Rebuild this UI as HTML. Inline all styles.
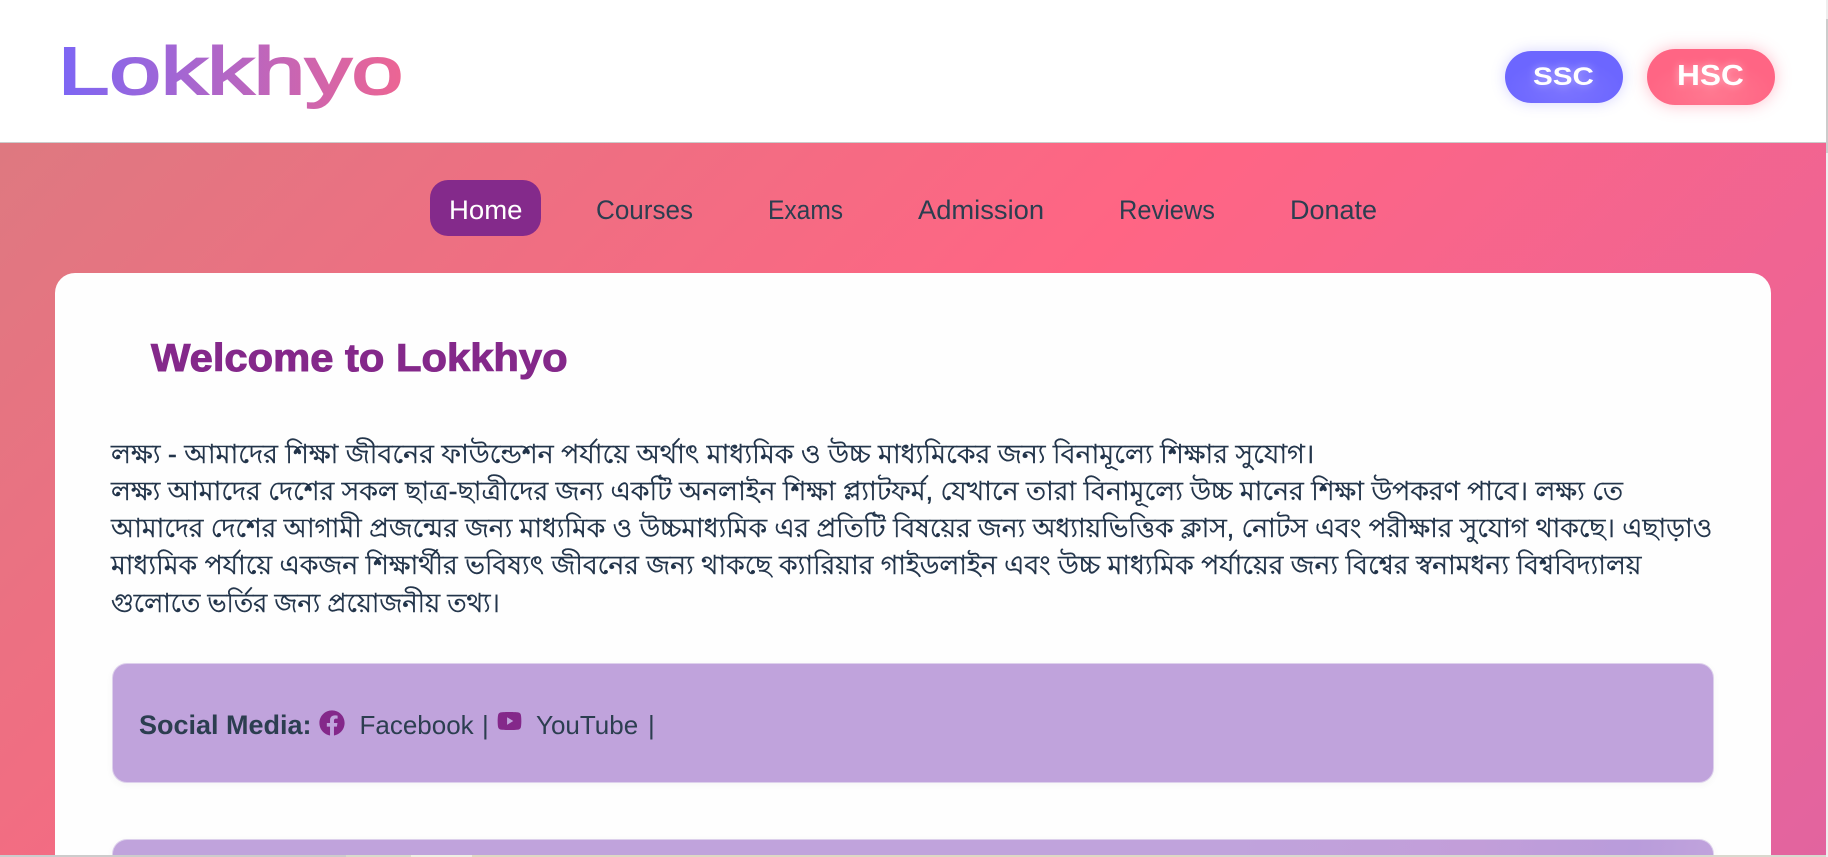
<!DOCTYPE html>
<html lang="bn">
<head>
<meta charset="utf-8">
<title>Lokkhyo</title>
<style>
html,body{margin:0;padding:0;width:1828px;height:857px;overflow:hidden;background:#fff}
body{position:relative;font-family:"Liberation Sans",sans-serif;color:#2c3e50}
.abs,.nav,.line,.soc{position:absolute;white-space:nowrap}
#bg{position:absolute;left:0;top:0;width:1828px;height:857px;background:linear-gradient(135deg,#da7b80 0%,#ff6584 50%,#e2649f 100%)}
#header{position:absolute;left:0;top:0;width:1826px;height:142px;background:#fff;border-bottom:1px solid #ccc}
#logo{left:56.5px;top:33.5px;padding:0 2px;margin-left:-2px;font-size:67px;line-height:76px;transform-origin:0 0;transform:scaleX(1.384);background:linear-gradient(90deg,#7b66f6,#ee6592);-webkit-background-clip:text;background-clip:text;color:transparent;-webkit-text-fill-color:transparent;-webkit-text-stroke:2px transparent}
.pill{position:absolute}
#ssc{left:1505px;top:51px;width:118px;height:52px;border-radius:26px;background:radial-gradient(ellipse 50% 60% at 50% 75%,#7c74ff,#6c66ff);box-shadow:0 0 14px rgba(108,99,255,.28)}
#hsc{left:1647px;top:49px;width:128px;height:56px;border-radius:28px;background:radial-gradient(ellipse 50% 60% at 50% 80%,#ff7890,#ff6584);box-shadow:0 0 16px rgba(255,101,132,.42)}
.pt{position:absolute;color:#fff;font-weight:bold;transform-origin:0 0;text-shadow:0 0 8px rgba(255,255,255,.45);white-space:nowrap}
#pill-home{position:absolute;left:430px;top:180px;width:111px;height:56px;border-radius:18px;background:#842a8b}
.nav{top:195px;font-size:27px;line-height:30px;transform-origin:0 0}
#card{position:absolute;left:55px;top:273px;width:1716px;height:584px;border-radius:20px 20px 0 0;background:#fefefe}
#title{left:151px;top:336.5px;font-size:39px;line-height:44px;font-weight:bold;color:#84288a;transform-origin:0 0;transform:scaleX(1.07);-webkit-text-stroke:1px #84288a}
.line{left:111px;font-size:26.4px;line-height:32px;color:#22344a;transform-origin:0 0;-webkit-text-stroke:.4px #22344a}
.box{position:absolute;left:112px;width:1600px;border:1px solid #ddd0ec;background:#c0a3dc;border-radius:15px;box-sizing:content-box;box-shadow:0 2px 8px rgba(0,0,0,.04)}
.soc{font-size:26px;line-height:30px;top:710px}
#strip{position:absolute;left:0;top:855px;width:1828px;height:2px;background:linear-gradient(90deg,#ccc 0,#ccc 346px,#d8dccc 346px,#d8dccc 411px,#eef0e4 411px,#eef0e4 472px,#ded9c4 472px,#ded9c4 1200px,#d9d9cf 1200px)}
#sb{position:absolute;left:1826px;top:0;width:2px;height:857px;background:#eee}
#sb i{position:absolute;left:0;top:19px;width:2px;height:134px;background:#ccc}
</style>
</head>
<body>
<div id="bg"></div>
<div id="header"></div>
<div class="abs" id="logo">Lokkhyo</div>
<div class="pill" id="ssc"></div>
<div class="pt" style="left:1533px;top:62.5px;font-size:24.7px;line-height:30px;transform:scaleX(1.2)">SSC</div>
<div class="pill" id="hsc"></div>
<div class="pt" style="left:1677px;top:59px;font-size:28.8px;line-height:34px;transform:scaleX(1.1)">HSC</div>

<div id="pill-home"></div>
<div class="nav" style="left:449px;color:#fff;transform:scaleX(1.02)">Home</div>
<div class="nav" style="left:596px;transform:scaleX(.965)">Courses</div>
<div class="nav" style="left:768px;transform:scaleX(.91)">Exams</div>
<div class="nav" style="left:918px;transform:scaleX(1.012)">Admission</div>
<div class="nav" style="left:1119px;transform:scaleX(.94)">Reviews</div>
<div class="nav" style="left:1290px">Donate</div>

<div id="card"></div>
<div class="abs" id="title">Welcome to Lokkhyo</div>

<div class="line" style="top:438px;transform:scaleX(1.016)">লক্ষ্য - আমাদের শিক্ষা জীবনের ফাউন্ডেশন পর্যায়ে অর্থাৎ মাধ্যমিক ও উচ্চ মাধ্যমিকের জন্য বিনামূল্যে শিক্ষার সুযোগ।</div>
<div class="line" style="top:475px;transform:scaleX(1.011)">লক্ষ্য আমাদের দেশের সকল ছাত্র-ছাত্রীদের জন্য একটি অনলাইন শিক্ষা প্ল্যাটফর্ম, যেখানে তারা বিনামূল্যে উচ্চ মানের শিক্ষা উপকরণ পাবে। লক্ষ্য তে</div>
<div class="line" style="top:512px;transform:scaleX(1.003)">আমাদের দেশের আগামী প্রজন্মের জন্য মাধ্যমিক ও উচ্চমাধ্যমিক এর প্রতিটি বিষয়ের জন্য অধ্যায়ভিত্তিক ক্লাস, নোটস এবং পরীক্ষার সুযোগ থাকছে। এছাড়াও</div>
<div class="line" style="top:549px;transform:scaleX(1.009)">মাধ্যমিক পর্যায়ে একজন শিক্ষার্থীর ভবিষ্যৎ জীবনের জন্য থাকছে ক্যারিয়ার গাইডলাইন এবং উচ্চ মাধ্যমিক পর্যায়ের জন্য বিশ্বের স্বনামধন্য বিশ্ববিদ্যালয়</div>
<div class="line" style="top:587px;transform:scaleX(.973)">গুলোতে ভর্তির জন্য প্রয়োজনীয় তথ্য।</div>

<div class="box" style="top:663px;height:118px"></div>
<div class="soc" style="left:139px;font-weight:bold;font-size:27px">Social Media:</div>
<svg style="position:absolute;left:319px;top:710px" width="26" height="26" viewBox="0 0 512 512"><path fill="#84288a" d="M504 256C504 119 393 8 256 8S8 119 8 256c0 123.78 90.69 226.38 209.25 245V327.69h-63V256h63v-54.64c0-62.15 37-96.48 93.67-96.48 27.14 0 55.52 4.84 55.52 4.84v61h-31.28c-30.8 0-40.41 19.12-40.41 38.73V256h68.78l-11 71.69h-57.78V501C413.31 482.38 504 379.78 504 256z"/></svg>
<div class="soc" style="left:359.5px">Facebook</div>
<div class="soc" style="left:482px">|</div>
<svg style="position:absolute;left:496.5px;top:709px" width="25" height="24" viewBox="0 0 576 512" preserveAspectRatio="none"><path fill="#84288a" d="M549.655 124.083c-6.281-23.65-24.787-42.276-48.284-48.597C458.781 64 288 64 288 64S117.22 64 74.629 75.486c-23.497 6.322-42.003 24.947-48.284 48.597-11.412 42.867-11.412 132.305-11.412 132.305s0 89.438 11.412 132.305c6.281 23.65 24.787 41.5 48.284 47.821C117.22 448 288 448 288 448s170.78 0 213.371-11.486c23.497-6.321 42.003-24.171 48.284-47.821 11.412-42.867 11.412-132.305 11.412-132.305s0-89.438-11.412-132.305zm-317.51 213.508V175.185l142.739 81.205-142.739 81.201z"/></svg>
<div class="soc" style="left:536px">YouTube</div>
<div class="soc" style="left:648px">|</div>

<div class="box" style="top:839px;height:17px;border-bottom:0;border-radius:15px 15px 0 0;background:linear-gradient(100deg,#c0a3dc 0%,#c0a3dc 70%,#c29ed9 85%,#b99cdb 95%,#c0a3dc 100%)"></div>

<div id="strip"></div>
<div id="sb"><i></i></div>
</body>
</html>
